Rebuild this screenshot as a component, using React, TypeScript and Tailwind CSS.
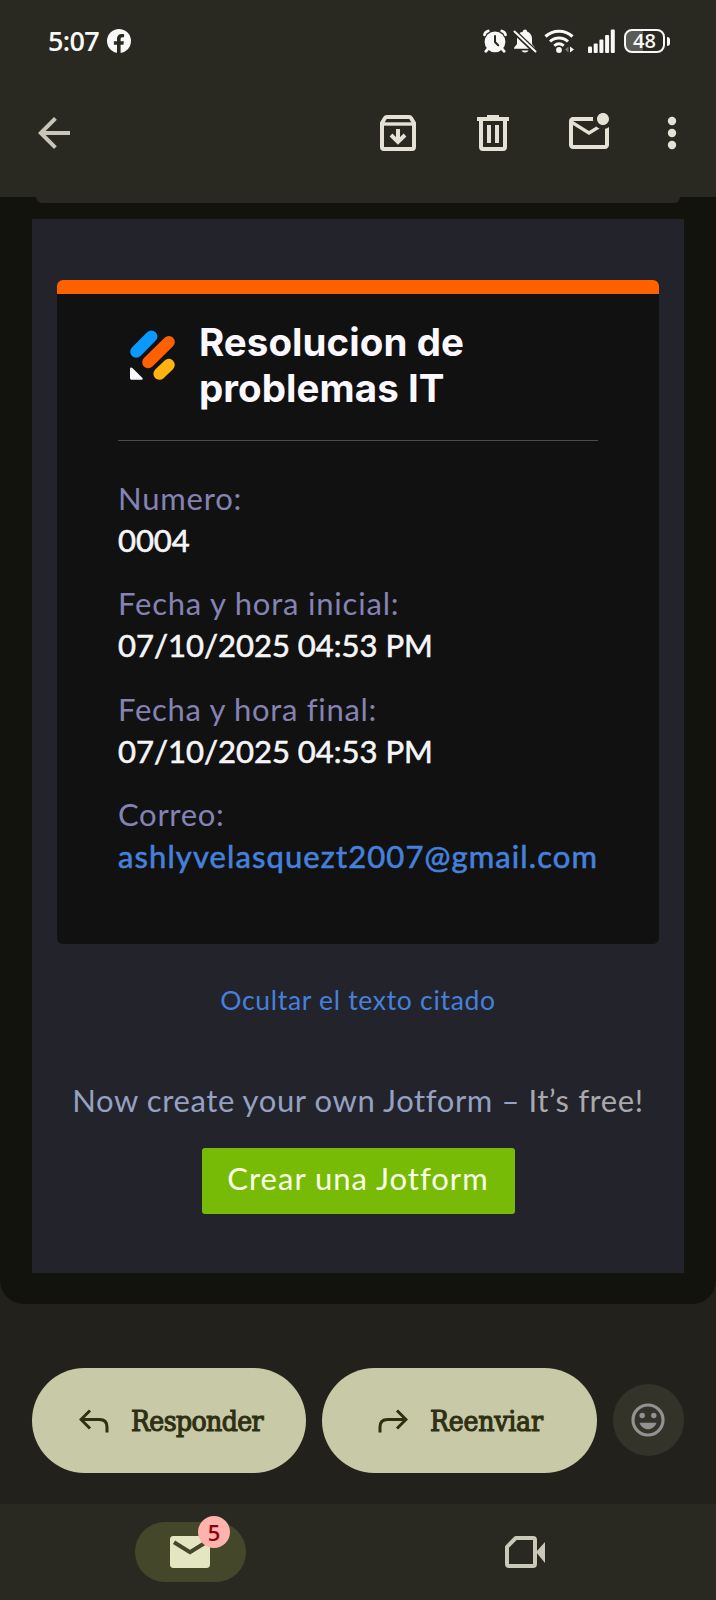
import React from 'react'

const fields = [
  { label: 'Numero:', value: '0004', labelClass: 'tracking-[0.8px]', valueClass: 'text-[#f5f5f7] tracking-[-0.1px]' },
  { label: 'Fecha y hora inicial:', value: '07/10/2025 04:53 PM', labelClass: 'tracking-[0.8px]', valueClass: 'text-[#f5f5f7] tracking-[0px]' },
  { label: 'Fecha y hora final:', value: '07/10/2025 04:53 PM', labelClass: 'tracking-[0.7px]', valueClass: 'text-[#f5f5f7] tracking-[0px]' },
  { label: 'Correo:', value: 'ashlyvelasquezt2007@gmail.com', labelClass: 'tracking-[0.7px]', valueClass: 'text-[#4581dc] tracking-[1.1px]' },
]

function StatusBar() {
  return (
    <div className="h-[82px] pl-[48px] pr-[46px] flex items-center text-[#f8f8f6]">
      <span className="w-[59px] font-['Open_Sans'] text-[27px] leading-[30px] font-semibold tracking-[-0.7px] whitespace-nowrap">5:07</span>
      <svg viewBox="0 0 24 24" className="w-6 h-6">
        <circle cx="12" cy="12" r="12" fill="currentColor" />
        <path d="M10 24v-8.3H6.9v-3.5H10V9.8c0-3 1.8-4.8 4.5-4.8 1 0 2 .2 2.6.3v3h-1.5c-1.5 0-2 .9-2 1.9v2h3.3l-.5 3.5h-2.8V24z" fill="#2a2921" />
      </svg>

      <div className="ml-auto flex items-center">
        {/* Alarm */}
        <svg viewBox="0 0 24 24" className="w-6 h-6" fill="none" stroke="currentColor" strokeLinecap="round">
          <circle cx="12" cy="12.8" r="10.4" fill="currentColor" stroke="none" />
          <path d="M1.500 5.800Q2 3 5.200 2M22.500 5.800Q22 3 18.800 2" strokeWidth="2.800" />
          <path d="m4.800 20-2 2.300m16.400-2.300 2 2.300" strokeWidth="2.800" />
          <path d="M12 7v6l3.200 3.200" stroke="#2a2921" strokeWidth="2" />
        </svg>
        {/* Muted bell */}
        <svg viewBox="0 0 24 24" className="ml-[6px] w-6 h-6">
          <path d="M12 .5c-1.200 0-2 .7-2 1.900C6 3.400 4 6 4 10v4.500c0 1.700-2.700 2.700-3 5.300h21c-.3-2.600-3-3.600-3-5.300V10c0-4-2-6.600-5-7.600C14 1.200 13.200.5 12 .5zM8.500 21.500a3.600 2.600 0 0 0 7 0z" fill="currentColor" />
          <path d="m1.200 2.500 21 20" stroke="#2a2921" strokeWidth="5" />
          <path d="m1.500 2.500 21 20" stroke="currentColor" strokeWidth="2" strokeLinecap="round" />
        </svg>
        {/* Wi-Fi with traffic arrows */}
        <svg viewBox="0 0 30 24" className="ml-[7px] w-[30px] h-6" fill="none" stroke="currentColor">
          <path d="M1.500 7.500c7.500-7 19.500-7 27 0" strokeWidth="3.200" />
          <path d="M6 12.500c5-4.700 13-4.700 18 0" strokeWidth="3" />
          <path d="M10.200 16.800c3-2.600 6.600-2.600 9.600 0" strokeWidth="2.800" />
          <circle cx="15" cy="21" r="2.900" fill="currentColor" stroke="none" />
          <path d="M24.500 17.500v6l-3.500-3z" fill="#77766f" stroke="none" />
          <path d="M26 17.500v6l4-3z" fill="currentColor" stroke="none" />
        </svg>
        {/* Signal */}
        <svg viewBox="0 0 27 24" className="ml-[14px] w-[27px] h-6" fill="currentColor">
          <rect x="0" y="17.500" width="4" height="6.500" rx="1" />
          <rect x="5.700" y="14.500" width="4" height="9.500" rx="1" />
          <rect x="11.400" y="10.500" width="4" height="13.500" rx="1" />
          <rect x="17.100" y="6" width="4" height="18" rx="1" />
          <rect x="22.800" y="0.500" width="4" height="23.500" rx="1" />
        </svg>
        {/* Battery */}
        <div className="ml-[9px] flex items-center gap-[2px]">
          <div className="w-[41px] h-6 rounded-[8px] border-2 border-current bg-linear-to-r from-[#5b5a55] from-45% to-[#2a2921] to-45% flex items-center justify-center font-['Open_Sans'] text-[20px] leading-5 font-semibold">
            48
          </div>
          <div className="w-[3px] h-[9px] rounded-r bg-current" />
        </div>
      </div>
    </div>
  )
}

function Toolbar() {
  return (
    <div className="h-[102px] pl-[30px] pr-5 flex items-center text-[#e5e2d5]">
      <svg viewBox="0 0 24 24" className="w-12 h-12 text-[#c9c6b8]" fill="currentColor">
        <path d="M20 11H7.830l5.590-5.590L12 4l-8 8 8 8 1.410-1.410L7.830 13H20z" />
      </svg>
      <svg viewBox="0 0 24 24" className="ml-auto w-12 h-12" fill="none" stroke="currentColor" strokeWidth="2">
        <path d="M4 7v12a1 1 0 0 0 1 1h14a1 1 0 0 0 1-1V7l-1.500-2.500Q18.200 4 17.500 4h-11q-.7 0-1 .5z" />
        <path d="M4 7.500h16" strokeWidth="1.700" />
        <path d="M12 10v6.200M8.500 13l3.500 3.500 3.500-3.500" />
      </svg>
      <svg viewBox="0 0 24 24" className="ml-[47px] w-12 h-12" fill="none" stroke="currentColor" strokeWidth="2">
        <path d="M4 5h16M9 4h6" />
        <path d="M6 5.500V19a1 1 0 0 0 1 1h10a1 1 0 0 0 1-1V5.500" />
        <path d="M10 8v9M14 8v9" />
      </svg>
      <svg viewBox="0 0 24 24" className="ml-[48px] w-12 h-12" fill="currentColor">
        <path d="M22 8.980V18c0 1.100-.9 2-2 2H4c-1.100 0-2-.9-2-2V6c0-1.100.9-2 2-2h10.100c-.06.320-.1.660-.1 1s.04.680.1 1H4l8 5 3.670-2.290c.470.430 1.020.760 1.630.980L12 13 4 8v10h16V9.900c.740-.150 1.420-.480 2-.920zM16 5c0 1.660 1.340 3 3 3s3-1.340 3-3-1.340-3-3-3-3 1.340-3 3z" />
      </svg>
      <svg viewBox="0 0 24 24" className="ml-[35px] w-12 h-12" fill="currentColor">
        <circle cx="12" cy="6" r="2.100" />
        <circle cx="12" cy="12" r="2.100" />
        <circle cx="12" cy="18" r="2.100" />
      </svg>
    </div>
  )
}

function FormCard() {
  return (
    <div className="h-[664px] rounded-[6px] overflow-hidden bg-[#111111]">
      <div className="h-[14px] bg-[#ff6100]" />
      <div className="px-[61px]">
        <div className="h-[147px] pt-[25px] flex border-b border-[#4c4c4c]">
          <svg viewBox="0 0 45 50" className="ml-3 mt-[11px] w-[45px] h-[50px]" fill="none" strokeLinecap="round">
            <path d="M6.200 21.800 21.400 6.400" stroke="#0a99ff" strokeWidth="12" />
            <path d="M18.200 32.200 38.800 12" stroke="#ff6100" strokeWidth="12" />
            <path d="M29.400 43.800 38.800 34.800" stroke="#ffb210" strokeWidth="12" />
            <path d="M0 39.200c0-1.800 1.300-2.300 2.400-1.200l9.800 9.800c1.100 1.100.5 2-.8 2H1.800C.7 49.800 0 49 0 48z" fill="#faf8ff" />
          </svg>
          <h1 className="ml-[24px] font-['Inter'] text-[38.500px] leading-[46px] font-bold tracking-[0.05px] text-[#fbf8ff] whitespace-nowrap">
            Resolucion de<br />problemas IT
          </h1>
        </div>
        <div className="mt-[36px] flex flex-col gap-[21.300px] font-['Lato'] text-[31px] leading-[42px] whitespace-nowrap">
          {fields.map((field, idx) => (
            <div key={idx}>
              <p className={`text-[#8583b4] ${field.labelClass}`}>{field.label}</p>
              <p className={`[-webkit-text-stroke:0.6px_currentColor] ${field.valueClass}`}>{field.value}</p>
            </div>
          ))}
        </div>
      </div>
    </div>
  )
}

function ReplyBar() {
  return (
    <div className="h-[200px] pt-16 px-8 flex items-start gap-4 font-['DejaVu_Serif_Condensed','DejaVu_Serif'] text-[28px] text-[#2f3013]">
      <button className="w-[274px] h-[105px] pl-[47px] rounded-full bg-[#c8caa7] flex items-center">
        <svg viewBox="0 0 30 24" className="w-[30px] h-6" fill="none" stroke="currentColor" strokeWidth="3">
          <path d="M11 1.500 2 10.500l9 9M2 10.500h18.500q7.500 0 7.500 7.500v5.500" />
        </svg>
        <span className="ml-[22px] mt-[2px] tracking-[-0.6px] [-webkit-text-stroke:1.1px_currentColor]">Responder</span>
      </button>
      <button className="w-[275px] h-[105px] pl-[56px] rounded-full bg-[#c8caa7] flex items-center">
        <svg viewBox="0 0 30 24" className="w-[30px] h-6" fill="none" stroke="currentColor" strokeWidth="3">
          <path d="m19 1.500 9 9-9 9M28 10.500H9.500Q2 10.500 2 18v5.500" />
        </svg>
        <span className="ml-[22px] mt-[2px] tracking-[-0.2px] [-webkit-text-stroke:1.1px_currentColor]">Reenviar</span>
      </button>
      <button className="mt-4 w-[71px] h-[72px] rounded-full bg-[#33332a] flex items-center justify-center">
        <svg viewBox="0 0 34 34" className="w-[34px] h-[34px] -ml-px text-[#929292]" fill="currentColor">
          <circle cx="17" cy="17" r="15" fill="none" stroke="currentColor" strokeWidth="3.200" />
          <circle cx="11.200" cy="12.500" r="2.700" />
          <circle cx="22.800" cy="12.500" r="2.700" />
          <path d="M8.500 19.700h17c-1.400 4-4.700 6.500-8.500 6.500s-7.100-2.500-8.500-6.500z" />
        </svg>
      </button>
    </div>
  )
}

function BottomNav() {
  return (
    <div className="h-24 pt-[18px] pl-[135px] flex items-start bg-[#2a2921]">
      <div className="relative w-[111px] h-[60px] rounded-full bg-[#45472b] flex items-center justify-center">
        <svg viewBox="0 0 24 24" className="w-12 h-12 -ml-px text-[#e3e6c1]">
          <rect x="2" y="4" width="20" height="16" rx="1.700" fill="currentColor" />
          <path d="m4 7.100 8 5 8-5" fill="none" stroke="#45472b" strokeWidth="2" />
        </svg>
        <span className="absolute left-[63px] -top-[6px] w-8 h-8 rounded-full bg-[#ffb3ad] flex items-center justify-center font-['Open_Sans'] text-[22px] leading-8 font-semibold text-[#8c0010]">5</span>
      </div>
      <svg viewBox="0 0 24 24" className="ml-[255px] mt-[6px] w-12 h-12 text-[#cac8b7]" fill="none" stroke="currentColor" strokeWidth="2" strokeLinejoin="round">
        <path d="M3 9.400 7.400 5H16a1 1 0 0 1 1 1v12a1 1 0 0 1-1 1H4a1 1 0 0 1-1-1z" />
        <path d="M17.500 12 22 7v10.500z" fill="currentColor" stroke="none" />
      </svg>
    </div>
  )
}

export default function App() {
  return (
    <div className="w-[716px] h-[1600px] overflow-hidden flex flex-col bg-[#22211b]">
      <header className="h-[197px] bg-[#2a2921]">
        <StatusBar />
        <Toolbar />
      </header>

      <main className="relative h-[1107px] px-8">
        <div className="absolute inset-0 rounded-b-[24px] bg-[#12130c]" />
        <div className="relative mx-1 h-[6px] rounded-b-[12px] bg-[#2a2921]" />
        <section className="relative mt-4 h-[1054px] pt-[61px] px-[25px] bg-[#23232b] font-['Lato']">
          <FormCard />
          <p className="mt-[38px] text-center text-[26.500px] leading-[36px] tracking-[0.7px] text-[#4581dc]">Ocultar el texto citado</p>
          <p className="mt-[61px] -mx-5 text-center text-[31px] leading-[42px] tracking-[0.6px] whitespace-nowrap text-[#95a1c2]">
            Now create your own Jotform – <span className="text-[#a9a9ac]">It’s free!</span>
          </p>
          <button className="mt-[27px] mx-auto w-[313px] h-[66px] pb-[6px] rounded-[3px] bg-[#78bb07] flex items-center justify-center text-[31px] tracking-[1px] text-[#f8ffe6]">
            Crear una Jotform
          </button>
        </section>
      </main>

      <ReplyBar />
      <BottomNav />
    </div>
  )
}
